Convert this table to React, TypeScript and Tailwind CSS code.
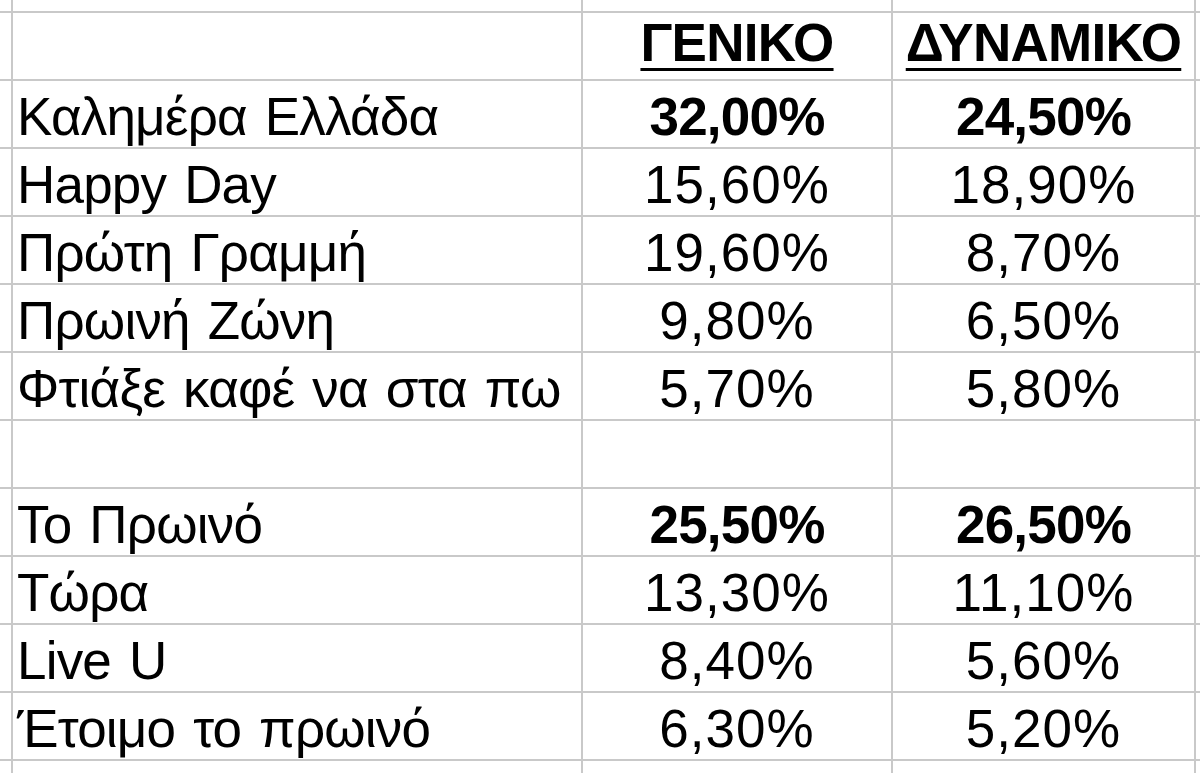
import React from "react"

// Spreadsheet-style audience share table (Greek morning shows)
interface Row {
    name: string
    general: string
    dynamic: string
    bold?: boolean
}

const rows: (Row | null)[] = [
    { name: "Καλημέρα Ελλάδα", general: "32,00%", dynamic: "24,50%", bold: true },
    { name: "Happy Day", general: "15,60%", dynamic: "18,90%" },
    { name: "Πρώτη Γραμμή", general: "19,60%", dynamic: "8,70%" },
    { name: "Πρωινή Ζώνη", general: "9,80%", dynamic: "6,50%" },
    { name: "Φτιάξε καφέ να στα πω", general: "5,70%", dynamic: "5,80%" },
    null,
    { name: "Το Πρωινό", general: "25,50%", dynamic: "26,50%", bold: true },
    { name: "Τώρα", general: "13,30%", dynamic: "11,10%" },
    { name: "Live U", general: "8,40%", dynamic: "5,60%" },
    { name: "Έτοιμο το πρωινό", general: "6,30%", dynamic: "5,20%" },
]

const cell = "bg-white flex items-end pb-[4px] leading-none overflow-hidden whitespace-nowrap"

export default function App() {
    return (
        <div
            className="w-[1200px] h-[773px] overflow-hidden bg-[#c9c9c9] text-black text-[53px]"
            style={{ fontFamily: '"Liberation Sans", Arial, sans-serif' }}
        >
            <div className="grid grid-cols-[11px_568px_308px_301px_4px] grid-rows-[11px_repeat(11,66px)_20px] gap-[2px]">
                {/* top partial row */}
                {[0, 1, 2, 3, 4].map((i) => (
                    <div key={`t${i}`} className="bg-white" />
                ))}

                {/* header row */}
                <div className="bg-white" />
                <div className="bg-white" />
                <div className={`${cell} justify-center font-bold tracking-[-0.7px]`}>
                    <span className="underline decoration-[3px] underline-offset-[7px] pb-[6px]">ΓΕΝΙΚΟ</span>
                </div>
                <div className={`${cell} justify-center font-bold tracking-[-0.7px]`}>
                    <span className="underline decoration-[3px] underline-offset-[7px] pb-[6px]">ΔΥΝΑΜΙΚΟ</span>
                </div>
                <div className="bg-white" />

                {rows.map((r, idx) =>
                    r ? (
                        <React.Fragment key={idx}>
                            <div className="bg-white" />
                            <div className={`${cell} pl-[4px] tracking-[-0.8px] [word-spacing:4px]`}>{r.name}</div>
                            <div className={`${cell} justify-center ${r.bold ? "font-bold tracking-[-0.8px]" : "tracking-[1px]"}`}>
                                {r.general}
                            </div>
                            <div className={`${cell} justify-center ${r.bold ? "font-bold tracking-[-0.8px]" : "tracking-[1px]"}`}>
                                {r.dynamic}
                            </div>
                            <div className="bg-white" />
                        </React.Fragment>
                    ) : (
                        <React.Fragment key={idx}>
                            {[0, 1, 2, 3, 4].map((i) => (
                                <div key={i} className="bg-white" />
                            ))}
                        </React.Fragment>
                    )
                )}

                {/* bottom partial row */}
                {[0, 1, 2, 3, 4].map((i) => (
                    <div key={`b${i}`} className="bg-white" />
                ))}
            </div>
        </div>
    )
}
